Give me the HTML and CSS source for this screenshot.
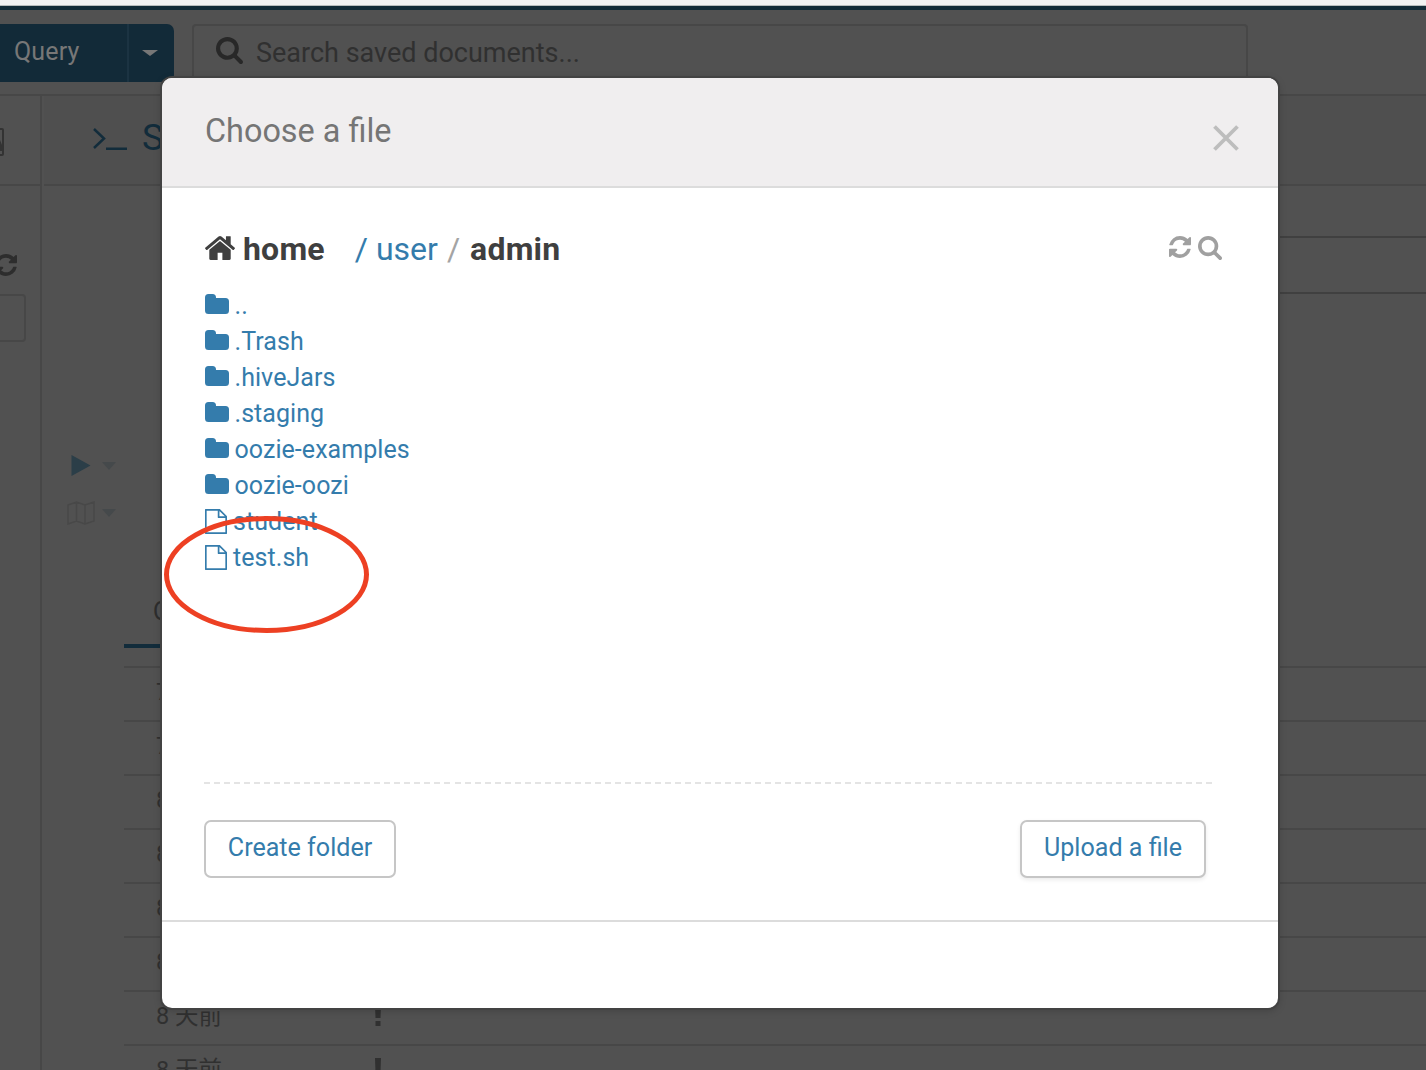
FILE: index.html
```html
<!DOCTYPE html>
<html lang="en">
<head>
<meta charset="utf-8">
<title>Choose a file</title>
<link rel="stylesheet" href="styles.css">
</head>
<body>
<svg class="defs" width="0" height="0" aria-hidden="true">
  <symbol id="search" viewBox="64 128 1664 1664"><path d="M1216 832q0-185-131.500-316.500t-316.500-131.500-316.500 131.500-131.500 316.500 131.500 316.500 316.500 131.500 316.500-131.500 131.500-316.500zm512 832q0 52-38 90t-90 38q-54 0-90-38l-343-342q-179 124-399 124-143 0-273.500-55.500t-225-150-150-225-55.500-273.500 55.500-273.500 150-225 225-150 273.500-55.500 273.500 55.500 225 150 150 225 55.500 273.500q0 220-124 399l343 343q37 37 37 90z"/></symbol>
  <symbol id="refresh" viewBox="128 128 1536 1536"><path d="M1639 1056q0 5-1 7-64 268-268 434.500t-478 166.500q-146 0-282.500-55t-243.500-157l-129 129q-19 19-45 19t-45-19-19-45v-448q0-26 19-45t45-19h448q26 0 45 19t19 45-19 45l-137 137q71 66 161 102t187 36q134 0 250-65t186-179q11-17 53-117 8-23 30-23h192q13 0 22.500 9.500t9.500 22.500zm25-800v448q0 26-19 45t-45 19h-448q-26 0-45-19t-19-45 19-45l138-138q-148-137-349-137-134 0-250 65t-186 179q-11 17-53 117-8 23-30 23h-199q-13 0-22.500-9.500t-9.500-22.500v-7q65-268 270-434.500t480-166.500q146 0 284 55.500t245 156.500l130-129q19-19 45-19t45 19 19 45z"/></symbol>
  <symbol id="home" viewBox="89 253 1614 1283"><path d="M1472 992v480q0 26-19 45t-45 19h-384v-384h-256v384h-384q-26 0-45-19t-19-45v-480q0-1 .5-3t.5-3l575-474 575 474q1 2 1 6zm223-69l-62 74q-8 9-21 11h-3q-13 0-21-7l-692-577-692 577q-12 8-24 7-13-2-21-11l-62-74q-8-10-7-23.500t11-21.500l719-599q32-26 76-26t76 26l244 204v-195q0-14 9-23t23-9h192q14 0 23 9t9 23v408l219 182q10 8 11 21.500t-7 23.500z"/></symbol>
  <symbol id="folder" viewBox="0 0 24 20"><path d="M0 3.500Q0 0 3.500 0H7.500Q11 0 11 3.500V4H20.500Q24 4 24 7.500V16.500Q24 20 20.500 20H3.500Q0 20 0 16.500Z"/></symbol>
  <symbol id="file" viewBox="0 0 22 25"><path fill="none" stroke="currentColor" stroke-width="1.700" stroke-linejoin="round" d="M.8.8H14.500L21.200 7.500V24.200H.8ZM13.600 1V8.200H21"/></symbol>
</svg>
<div class="page">
  <div class="window-edge"></div>
  <div class="brand-line"></div>
  <header class="topbar">
    <div class="query-button"><span class="query-label">Query</span><span class="query-toggle"><i class="caret light"></i></span></div>
    <div class="search-box"><svg class="search-icon"><use href="#search"/></svg><span>Search saved documents...</span></div>
  </header>
  <div class="workspace">
    <aside class="sidebar">
      <div class="sidebar-tabs"><svg class="doc-icon" viewBox="0 0 4 28"><path fill="none" stroke="currentColor" stroke-width="2" d="M0 1H2Q3 1 3 2V26Q3 27 2 27H0"/><path d="M0 12 2 17V23H0Z"/></svg></div>
      <svg class="sidebar-refresh"><use href="#refresh"/></svg>
      <div class="sidebar-filter"></div>
    </aside>
    <main class="editor">
      <div class="editor-title"><svg class="prompt-icon" viewBox="0 0 34 23"><path fill="none" stroke="currentColor" stroke-width="2.500" d="M1 1 11 10.500 1 20M13 20.700H34"/></svg><span>S</span></div>
      <div class="field-row first"></div>
      <div class="field-row"></div>
      <div class="runner">
        <div class="run-row"><svg class="play" viewBox="0 0 19 21"><path d="M0 0 19 10.500 0 21Z"/></svg><i class="caret dim"></i></div>
        <div class="run-row map-row"><svg class="map" viewBox="0 0 28 24"><path fill="none" stroke="currentColor" stroke-width="1.500" d="M1 4 9.500 1 18 4 27 1V20L18 23 9.500 20 1 23ZM9.500 1V20M18 4V23"/></svg><i class="caret dim"></i></div>
      </div>
      <div class="history">
        <div class="history-tab"><span>Q</span></div>
        <div class="history-row"><span>7</span></div>
        <div class="history-row"><span>7</span></div>
        <div class="history-row"><span>8</span></div>
        <div class="history-row"><span>8</span></div>
        <div class="history-row"><span>8</span></div>
        <div class="history-row"><span>8</span></div>
        <div class="history-row"><span>8 天前</span><svg class="alert" viewBox="0 0 6 22"><path d="M0 0H6L5.500 14H.5ZM.5 17H5.500V22H.5Z"/></svg></div>
        <div class="history-row"><span>8 天前</span><svg class="alert" viewBox="0 0 6 22"><path d="M0 0H6L5.500 14H.5ZM.5 17H5.500V22H.5Z"/></svg></div>
      </div>
    </main>
  </div>
</div>
<section class="modal">
  <div class="modal-header">
    <h1>Choose a file</h1>
    <svg class="close" viewBox="0 0 26 26"><path fill="none" stroke="currentColor" stroke-width="3.800" d="M1.500 1.500 24.500 24.500M24.500 1.500 1.500 24.500"/></svg>
  </div>
  <div class="modal-body">
    <div class="path-row">
      <svg class="home-icon"><use href="#home"/></svg><b class="home">home</b><span class="user">/ user</span><span class="slash">/</span><b class="current">admin</b>
      <div class="path-tools"><svg><use href="#refresh"/></svg><svg><use href="#search"/></svg></div>
    </div>
    <ul class="files">
      <li><svg class="folder"><use href="#folder"/></svg><span>..</span></li>
      <li><svg class="folder"><use href="#folder"/></svg><span>.Trash</span></li>
      <li><svg class="folder"><use href="#folder"/></svg><span>.hiveJars</span></li>
      <li><svg class="folder"><use href="#folder"/></svg><span>.staging</span></li>
      <li><svg class="folder"><use href="#folder"/></svg><span>oozie-examples</span></li>
      <li><svg class="folder"><use href="#folder"/></svg><span>oozie-oozi</span></li>
      <li><svg class="file"><use href="#file"/></svg><span>student</span></li>
      <li><svg class="file"><use href="#file"/></svg><span>test.sh</span></li>
    </ul>
    <div class="divider"></div>
    <div class="actions"><button class="create">Create folder</button><button class="upload">Upload a file</button></div>
  </div>
  <div class="modal-footer"></div>
</section>
<svg class="annotation" viewBox="0 0 206 118"><ellipse cx="103.500" cy="58.500" rx="100" ry="56"/></svg>
</body>
</html>
```
FILE: styles.css
```css
* { box-sizing: border-box; }
body { margin: 0; width: 1426px; height: 1070px; overflow: hidden; position: relative; font-family: Roboto, "Noto Sans CJK SC", sans-serif; font-size: 25px; }
svg { display: block; flex: none; fill: currentColor; }
.defs { position: absolute; }
.page { height: 1070px; overflow: hidden; display: flex; flex-direction: column; background: #515151; color: #2d2d2d; }
.window-edge { height: 6px; flex: none; background: #f2f2f2; border-bottom: 1px solid #b9bdbd; }
.brand-line { height: 4px; flex: none; background: #122b37; }
.topbar { height: 86px; flex: none; display: flex; align-items: flex-start; padding-top: 14px; border-bottom: 2px solid #474747; }
.query-button { width: 174px; height: 58px; display: flex; background: #122a38; color: #777; border-radius: 0 7px 7px 0; }
.query-label { width: 129px; padding-left: 14px; line-height: 56px; letter-spacing: .15px; border-right: 2px solid #1b3342; }
.query-toggle { flex: 1; padding: 26px 0 0 13px; }
.caret { display: block; width: 0; height: 0; border: 8px solid transparent; border-top: 6px solid #777; border-bottom: 0; }
.search-box { width: 1056px; height: 60px; margin-left: 18px; display: flex; border: 2px solid #474747; border-radius: 4px; color: #303030; font-size: 27px; line-height: 54px; }
.search-icon { width: 27px; height: 27px; margin: 11px 13px 0 22px; color: #282828; }
.workspace { flex: 1; display: flex; min-height: 0; }
.sidebar { width: 42px; border-right: 2px solid #474747; overflow: hidden; }
.sidebar-tabs { height: 90px; padding-top: 32px; border-bottom: 2px solid #474747; }
.doc-icon { width: 4px; height: 28px; color: #333; }
.sidebar-refresh { width: 22px; height: 22px; margin: 68px 0 0 -5px; }
.sidebar-filter { width: 26px; height: 48px; margin-top: 18px; border: 2px solid #474747; border-left: 0; border-radius: 0 4px 4px 0; }
.editor { flex: 1; padding-left: 2px; min-width: 0; }
.editor-title { height: 90px; display: flex; padding-left: 49px; border-bottom: 2px solid #474747; background: #4f4f4f; color: #122c3b; font-size: 36px; line-height: 84px; }
.prompt-icon { width: 34px; height: 23px; margin: 32px 15px 0 0; }
.field-row { height: 56px; margin-left: 130px; border-bottom: 2px solid #404040; }
.field-row.first { height: 52px; }
.runner { padding: 161px 0 0 23px; }
.run-row { height: 21px; display: flex; align-items: center; }
.play { width: 20px; height: 21px; margin: 0 11px 0 4px; color: #2b3e48; }
.map-row { height: 24px; margin-top: 25px; }
.map { width: 28px; height: 24px; margin-right: 7px; color: #484848; }
.caret.dim { border-width: 8px 7px 0; border-top-color: #45494b; }
.history { margin: 69px 0 0 80px; }
.history-tab { height: 74px; border-bottom: 2px solid #474747; }
.history-tab span { display: block; width: 220px; height: 54px; padding-left: 29px; line-height: 36px; border-bottom: 4px solid #122c3b; }
.history-row { height: 54px; display: flex; padding-left: 32px; border-bottom: 2px solid #474747; line-height: 48px; font-size: 23.5px; color: #303030; }
.alert { width: 8px; height: 22px; margin: 12px 1044px 0 auto; }
.modal { position: absolute; left: 162px; top: 78px; width: 1116px; height: 930px; display: flex; flex-direction: column; background: #fff; border-radius: 10px; box-shadow: 0 0 0 2px #434343, 0 2px 8px rgba(0,0,0,.22); color: #3f3f3f; }
.modal-header { height: 110px; flex: none; display: flex; justify-content: space-between; padding: 0 39px 0 43px; background: #f0eeef; border-bottom: 2px solid #dcdcdc; border-radius: 10px 10px 0 0; }
h1 { margin: 0; color: #757575; font-size: 32.4px; font-weight: 400; line-height: 107px; }
.close { width: 26px; height: 26px; margin-top: 47px; color: #bdbdbd; }
.modal-body { height: 734px; padding: 42px 66px 0 42px; border-bottom: 2px solid #dcdcdc; }
.path-row { height: 38px; display: flex; padding-left: 1px; line-height: 38px; font-size: 32px; }
.home-icon { width: 30px; height: 24px; margin: 6px 8px 0 0; }
.home { margin-right: 30px; letter-spacing: .2px; }
.user { color: #347cac; margin-right: 9px; }
.slash { color: #a4a4a4; margin-right: 10px; }
.current { letter-spacing: .2px; }
.path-tools { display: flex; gap: 7px; margin: 6px -10px 0 auto; color: #a0a0a0; }
.path-tools svg { width: 22px; height: 22px; }
.path-tools svg + svg { width: 24px; height: 24px; }
.files { list-style: none; margin: 18px 0 0; padding: 0 0 0 1px; color: #347cac; }
.files li { height: 36px; display: flex; line-height: 39px; }
.files span { letter-spacing: .06px; }
.folder { width: 24px; height: 20px; margin: 8px 5.500px 0 0; }
.file { width: 22px; height: 25px; margin: 7px 6px 0 0; }
.divider { height: 2px; margin: 208px -2px 0 0; background: repeating-linear-gradient(90deg, #e4e4e4 0 6px, transparent 6px 10.020px); }
.actions { display: flex; justify-content: space-between; padding: 36px 6px 0 0; }
button { height: 58px; padding: 0 0 4px; border: 2px solid #c6c6c6; border-radius: 7px; background: #fff; color: #347cac; font: inherit; font-size: 25.1px; white-space: nowrap; }
.create { width: 192px; }
.upload { width: 186px; box-shadow: 0 2px 4px rgba(0,0,0,.08); }
.annotation { position: absolute; left: 163px; top: 516px; width: 206px; height: 118px; fill: none; stroke: #ed4023; stroke-width: 5; }
```
